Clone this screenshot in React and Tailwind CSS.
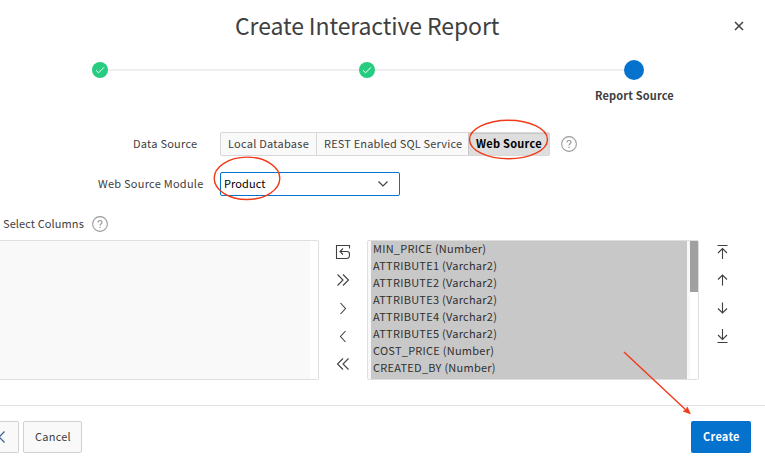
const columns = [
  'MIN_PRICE (Number)',
  'ATTRIBUTE1 (Varchar2)',
  'ATTRIBUTE2 (Varchar2)',
  'ATTRIBUTE3 (Varchar2)',
  'ATTRIBUTE4 (Varchar2)',
  'ATTRIBUTE5 (Varchar2)',
  'COST_PRICE (Number)',
  'CREATED_BY (Number)',
];

const shuttlePaths = [
  'M14.5 4.5V1.5H1.5V14.5H11.5C14 14.5 14.5 13 14.5 11V10C14.5 8.5 13.5 7.5 12 7.5H5M8 4.5L5 7.5L8 10.5',
  'M2.5 2.5L8 8L2.5 13.5M8 2.5L13.5 8L8 13.5',
  'M5.5 3L10.5 8.5L5.5 14',
  'M10.5 3L5.5 8.5L10.5 14',
  'M8 2.5L2.5 8L8 13.5M13.5 2.5L8 8L13.5 13.5',
];

const orderPaths = [
  'M3.5 1.5H13.5M8.5 15V4.5M4 9L8.5 4.5L13 9',
  'M8.5 13.5V3M4 7.5L8.5 3L13 7.5',
  'M8.5 2.5V13M4 8.5L8.5 13L13 8.5',
  'M8.5 1V11.5M4 7L8.5 11.5L13 7M3.5 14.5H13.5',
];

function Icon({ d }) {
  return (
    <svg viewBox="0 0 16 16" className="size-4 shrink-0" fill="none" stroke="#404040" strokeWidth="1.1">
      <path d={d} />
    </svg>
  );
}

function Help() {
  return (
    <svg viewBox="0 0 16 16" className="size-4 shrink-0" fill="none" stroke="#9a9a9a" strokeWidth="1.1">
      <circle cx="8" cy="8" r="7.4" />
      <path d="M6 6.6C6 5.2 6.9 4.5 8 4.5S10 5.2 10 6.3C10 7.7 8 7.8 8 9.6" strokeWidth="1.2" />
      <path d="M8 10.8V12" strokeWidth="1.2" />
    </svg>
  );
}

function Done() {
  return (
    <div className="flex size-4 shrink-0 items-center justify-center rounded-full bg-[#26cc80]">
      <svg viewBox="0 0 16 16" className="size-4" fill="none" stroke="#fff" strokeWidth="1">
        <path d="M4 8.3L6.6 10.8L12 5.3" />
      </svg>
    </div>
  );
}

export default function App() {
  return (
    <div className="relative flex h-[469px] w-[765px] flex-col overflow-hidden bg-white font-['Noto_Sans_CJK_SC','Noto_Sans',sans-serif] text-[11px] leading-4 tracking-[0.25px] whitespace-nowrap text-[#404040]">
      <header className="flex h-[52px] shrink-0 items-center justify-between pr-[21px] pl-[235px]">
        <h1 className="pb-[2px] text-[23px] leading-8 tracking-[-0.1px]">Create Interactive Report</h1>
        <svg viewBox="0 0 10 10" className="size-[10px]" stroke="#404040" strokeWidth="1.5">
          <path d="M1 1L9 9M9 1L1 9" />
        </svg>
      </header>

      <div className="flex h-9 shrink-0 items-center pl-[92px]">
        <Done />
        <div className="h-[2px] w-[251px] bg-[#efefef]" />
        <Done />
        <div className="h-[2px] w-[249px] bg-[#efefef]" />
        <div className="size-5 rounded-full bg-[#0572ce]" />
      </div>
      <div className="flex h-[14px] shrink-0 items-center pl-[595px] font-bold">
        <span className="pb-px tracking-[0.15px]">Report Source</span>
      </div>

      <div className="mt-[30px] flex h-6 shrink-0 items-center">
        <div className="w-[220px] pb-[2px] pl-[133px]">Data Source</div>
        <div className="flex h-6 w-[330px] rounded-[2px] border border-[#d8d8d8] bg-[#f9f9f9] leading-5">
          <div className="w-[96px] border-r border-[#d8d8d8] pl-[7px]">Local Database</div>
          <div className="w-[152px] border-r border-[#c8c8c8] pl-[7px] tracking-[0.17px]">REST Enabled SQL Service</div>
          <div className="w-[80px] bg-[#dedede] pl-[7px] font-bold text-black shadow-[inset_0_1px_1px_#c8c8c8]">Web Source</div>
        </div>
        <div className="pl-[11px]"><Help /></div>
      </div>

      <div className="mt-4 flex h-6 shrink-0 items-center">
        <div className="w-[220px] pb-[2px] pl-[98px]">Web Source Module</div>
        <div className="flex h-6 w-[180px] items-center justify-between rounded-[2px] border border-[#0572ce] pr-[11px] pl-[3px] text-black">
          <span className="pb-[2px] tracking-[0.1px]">Product</span>
          <svg viewBox="0 0 10 6" className="h-[6px] w-[10px]" fill="none" stroke="#404040" strokeWidth="1.2">
            <path d="M.5 .5L5 5L9.5 .5" />
          </svg>
        </div>
      </div>

      <div className="mt-4 flex h-6 shrink-0 items-center pl-[3px]">
        <span className="w-[89px] pb-[2px] tracking-[0.1px]">Select Columns</span>
        <Help />
      </div>

      <div className="mt-1 flex h-[140px] shrink-0">
        <div className="w-[319px] rounded-r-[2px] border border-l-0 border-[#dfdfdf] pr-2">
          <div className="h-full bg-[#f9f9f9]" />
        </div>
        <div className="flex w-12 flex-col items-center gap-3 pt-1">
          {shuttlePaths.map((d) => <Icon key={d} d={d} />)}
        </div>
        <div className="flex w-[332px] rounded-[2px] border border-[#dfdfdf] bg-[#f8f8f8] pl-[3px]">
          <div className="w-[316px] bg-[#c8c8c8] pl-[2px] text-[#303030]">
            {columns.map((c) => <div key={c} className="h-[17px] leading-[14px]">{c}</div>)}
          </div>
          <div className="ml-[3px] w-2 bg-white">
            <div className="h-[51px] bg-[#a0a0a0]" />
          </div>
        </div>
        <div className="flex w-[46px] flex-col items-center gap-3 pt-1">
          {orderPaths.map((d) => <Icon key={d} d={d} />)}
        </div>
      </div>

      <footer className="mt-[25px] flex flex-1 items-start border-t border-[#e0e0e0] pt-[15px] pr-[14px]">
        <div className="flex h-8 w-[19px] items-center rounded-r-[2px] border border-l-0 border-[#d0d0d0] bg-[#f9f9f9]">
          <svg viewBox="0 0 5 12" className="h-3 w-[5px]" fill="none" stroke="#385f95" strokeWidth="1.2">
            <path d="M4.5 .5L-.8 6L4.5 11.5" />
          </svg>
        </div>
        <button className="ml-1 flex h-8 w-[59px] items-center rounded-[2px] border border-[#d0d0d0] bg-[#f9f9f9] pb-[2px] pl-[11px]">
          <span>Cancel</span>
        </button>
        <button className="ml-auto flex h-8 w-[60px] items-center rounded-[2px] bg-[#0572ce] pb-[2px] pl-3 font-bold text-white">
          <span>Create</span>
        </button>
      </footer>

      <svg viewBox="0 0 765 469" className="pointer-events-none absolute inset-0 h-[469px] w-[765px]" fill="none" stroke="#f03a1a" strokeWidth="1.4">
        <ellipse cx="508.5" cy="139.5" rx="39" ry="19.3" />
        <ellipse cx="247" cy="178.3" rx="32.8" ry="21.2" />
        <path d="M624 352L687 411" />
        <path d="M690.5 414L683 411.2L686 410L687.2 406.8Z" fill="#f03a1a" strokeWidth="0.5" />
      </svg>
    </div>
  );
}
